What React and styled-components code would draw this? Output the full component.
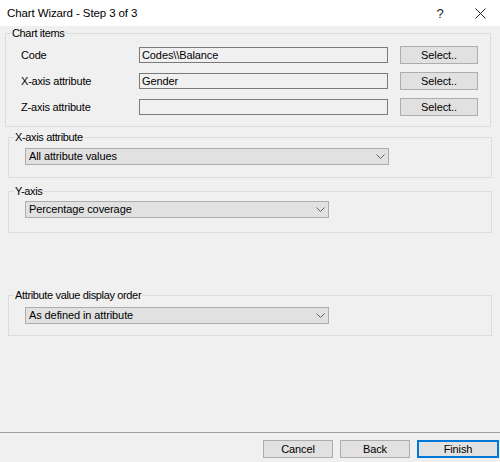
import React from 'react';
import styled, { createGlobalStyle } from 'styled-components';

const GlobalStyle = createGlobalStyle`
  html, body {
    margin: 0;
    padding: 0;
    background: #f0f0f0;
  }
  body {
    font-family: "Liberation Sans", Arial, sans-serif;
    font-size: 11px;
    color: #000;
  }
`;

// Window frame
const Window = styled.div`
  width: 500px;
  height: 462px;
  display: flex;
  flex-direction: column;
  background: #f0f0f0;
  overflow: hidden;
`;

const TitleBar = styled.div`
  height: 26px;
  flex: none;
  background: #fff;
  display: flex;
  align-items: center;
  padding-left: 7px;
`;

const Title = styled.div`
  flex: 1;
  font-size: 11.5px;
  letter-spacing: -0.1px;
`;

const TitleButton = styled.div`
  width: 40px;
  height: 26px;
  display: flex;
  align-items: center;
  justify-content: center;
  font-size: 13px;
  color: #222;
`;

const Content = styled.div`
  flex: 1;
  display: flex;
  flex-direction: column;
  padding-top: 0.5px;
`;

// Group boxes
const Group = styled.fieldset`
  margin: ${p => p.$top || 0}px 0 0 ${p => p.$left || 8}px;
  width: ${p => p.$width || 484}px;
  box-sizing: border-box;
  border: 1px solid #dcdcdc;
  padding: ${p => p.$pt ?? 4.5}px 0 ${p => p.$pb ?? 11}px ${p => p.$pl ?? 16}px;
  min-width: 0;
`;

const Legend = styled.legend`
  padding: 0 1px;
  margin-left: ${p => p.$indent ?? -11}px;
  line-height: 13px;
  font-size: 11px;
  letter-spacing: -0.35px;
`;

const ItemsGrid = styled.div`
  display: grid;
  grid-template-columns: 106px 249px 78px;
  column-gap: 12px;
  row-gap: 8px;
  align-items: center;
`;

const Label = styled.div`
  letter-spacing: -0.2px;
  line-height: 18px;
`;

const TextBox = styled.div`
  height: 16px;
  box-sizing: border-box;
  border: 1px solid #7a7a7a;
  background: #f0f0f0;
  padding-left: 2px;
  line-height: 14px;
  letter-spacing: -0.1px;
  white-space: nowrap;
`;

const Button = styled.div`
  width: ${p => p.$width || 78}px;
  height: 18px;
  box-sizing: border-box;
  border: 1px solid ${p => (p.$default ? '#0078d7' : '#adadad')};
  box-shadow: ${p => (p.$default ? 'inset 0 0 0 1px #0078d7' : 'none')};
  background: #e1e1e1;
  display: flex;
  align-items: center;
  justify-content: center;
  letter-spacing: -0.1px;
`;

const Dropdown = styled.div`
  width: ${p => p.$width}px;
  height: 17px;
  box-sizing: border-box;
  border: 1px solid #adadad;
  background: #e1e1e1;
  display: flex;
  align-items: center;
  padding: 0 3px 0 3px;
  letter-spacing: -0.1px;
`;

const DropdownText = styled.span`
  flex: 1;
`;

const Chevron = () => (
  <svg width="9" height="5" viewBox="0 0 9 5">
    <polyline points="0.5,0.5 4.5,4.5 8.5,0.5" fill="none" stroke="#606060" strokeWidth="1" />
  </svg>
);

const Spacer = styled.div`
  flex: 1;
`;

const Footer = styled.div`
  height: 30px;
  box-sizing: border-box;
  flex: none;
  border-top: 1px solid #a0a0a0;
  display: flex;
  justify-content: flex-end;
  gap: 7px;
  padding: 7px 1px 4px 0;
`;

const CloseIcon = () => (
  <svg width="11" height="11" viewBox="0 0 11 11">
    <path d="M0.5 0.5 L10.5 10.5 M10.5 0.5 L0.5 10.5" stroke="#222" strokeWidth="1" fill="none" />
  </svg>
);

const rows = [
  { label: 'Code', value: 'Codes\\\\Balance' },
  { label: 'X-axis attribute', value: 'Gender' },
  { label: 'Z-axis attribute', value: '' },
];

const App = () => {
  return (
    <Window>
      <GlobalStyle />
      <TitleBar>
        <Title>Chart Wizard - Step 3 of 3</Title>
        <TitleButton>?</TitleButton>
        <TitleButton>
          <CloseIcon />
        </TitleButton>
      </TitleBar>
      <Content>
        <Group $left={5} $width={486} $pt={6} $pb={10} $pl={15}>
          <Legend $indent={-10}>Chart items</Legend>
          <ItemsGrid>
            {rows.map(r => (
              <React.Fragment key={r.label}>
                <Label>{r.label}</Label>
                <TextBox>{r.value}</TextBox>
                <Button>Select..</Button>
              </React.Fragment>
            ))}
          </ItemsGrid>
        </Group>

        <Group $top={4.5} $pt={3.5} $pb={12}>
          <Legend>X-axis attribute</Legend>
          <Dropdown $width={364}>
            <DropdownText>All attribute values</DropdownText>
            <Chevron />
          </Dropdown>
        </Group>

        <Group $top={7.5} $pt={2.5} $pb={14}>
          <Legend>Y-axis</Legend>
          <Dropdown $width={304}>
            <DropdownText>Percentage coverage</DropdownText>
            <Chevron />
          </Dropdown>
        </Group>

        <Group $top={56.5}>
          <Legend>Attribute value display order</Legend>
          <Dropdown $width={304}>
            <DropdownText>As defined in attribute</DropdownText>
            <Chevron />
          </Dropdown>
        </Group>

        <Spacer />
      </Content>
      <Footer>
        <Button $width={70}>Cancel</Button>
        <Button $width={70}>Back</Button>
        <Button $width={82} $default>Finish</Button>
      </Footer>
    </Window>
  );
};

export default App;
